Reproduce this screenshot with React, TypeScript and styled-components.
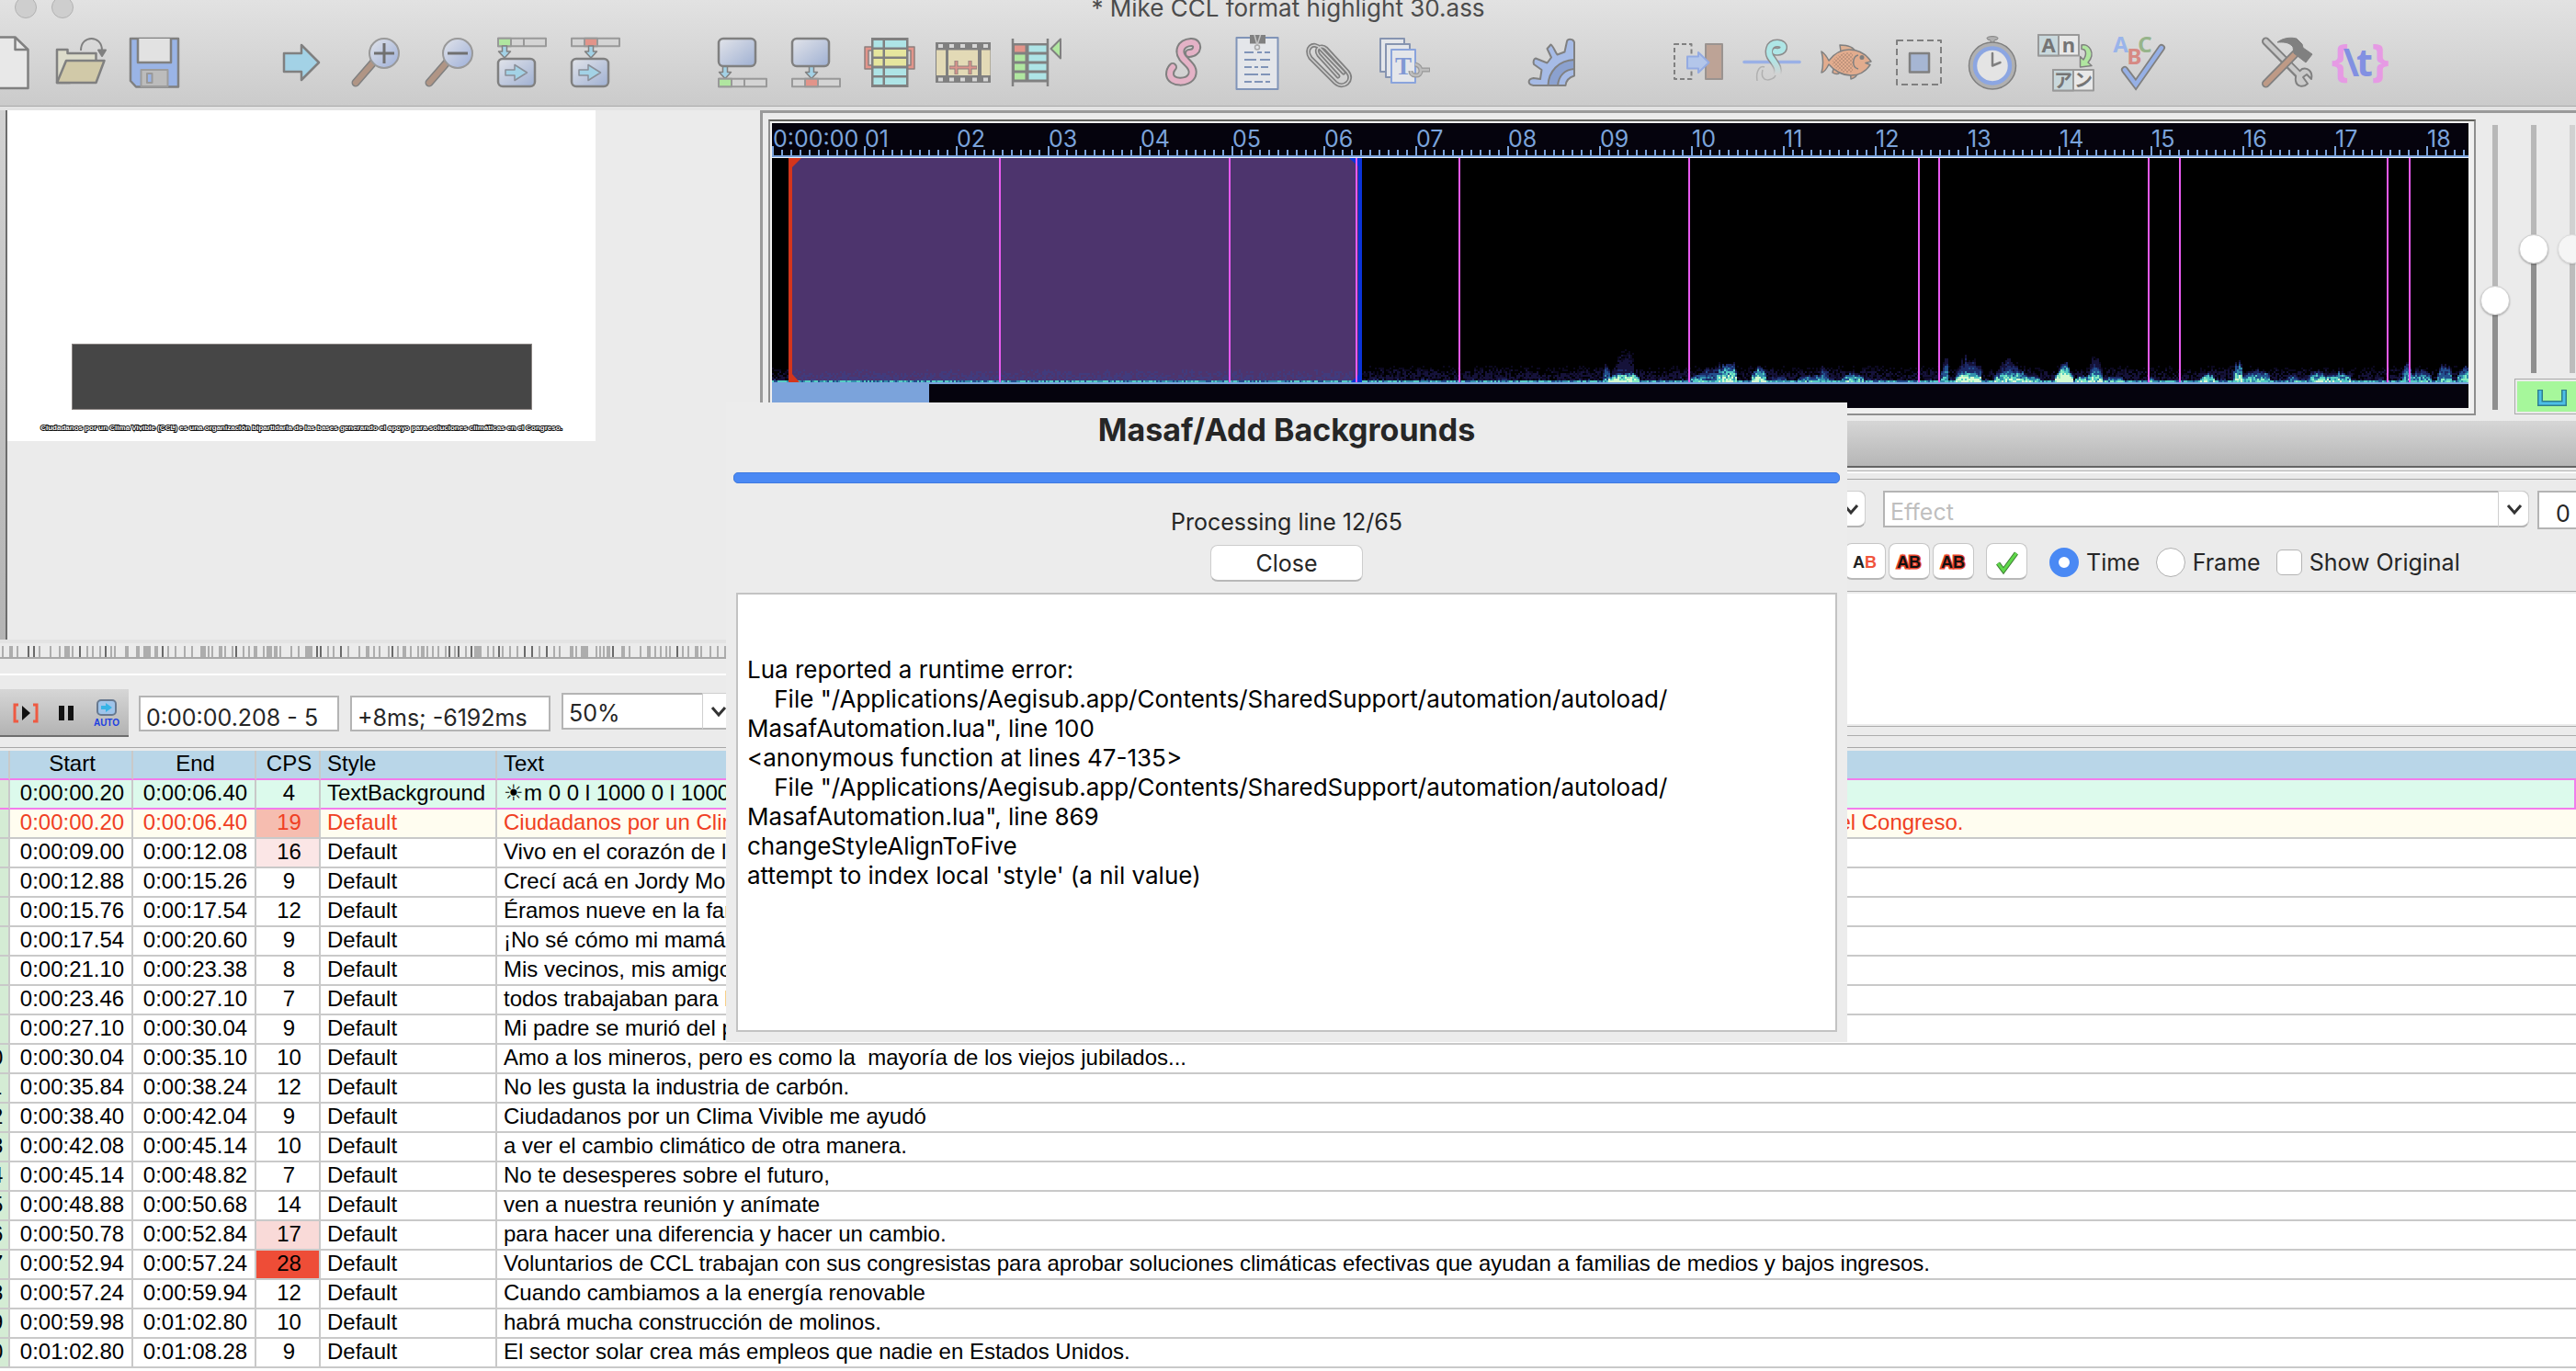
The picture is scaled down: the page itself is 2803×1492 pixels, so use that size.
import React from 'react';
import styled, { createGlobalStyle, css } from 'styled-components';

const ui = `Inter, Roboto, "Noto Sans", sans-serif`;
const gridFont = `"Liberation Sans", Arial, sans-serif`;
const G = '#808080';

const Global = createGlobalStyle`
  *, *::before, *::after { box-sizing: border-box; }
  body { margin: 0; background: #ebebeb; color: #262626; font-family: ${ui}; font-size: 25px; overflow: hidden; }
  button, input, select, textarea { font: inherit; color: inherit; margin: 0; }
`;

const Window = styled.div`
  position: relative;
  display: flex;
  flex-direction: column;
  height: 100vh;
  overflow: hidden;
`;

/* ---------- title bar and main toolbar ---------- */

const Header = styled.header`
  flex: none;
  background: linear-gradient(#e2e2e2, #cbcbcb);
  border-bottom: 1px solid #a8a8a8;
`;
const TitleBar = styled.div`
  display: grid;
  grid-template-columns: 1fr auto 1fr;
  align-items: center;
  height: 36px;
  margin-top: -10px;
`;
const Lights = styled.div`
  display: flex;
  gap: 16px;
  padding-left: 16px;
`;
const Light = styled.button`
  width: 24px;
  height: 24px;
  padding: 0;
  border: 1px solid #b2b2b2;
  border-radius: 50%;
  background: #cecece;
`;
const Title = styled.h1`
  margin: 0;
  padding-top: 2px;
  font-size: 26px;
  font-weight: 400;
  line-height: 32px;
  color: #4c4c4c;
`;
const Tools = styled.div`
  display: flex;
  height: 89px;
  margin-left: -32px;
  padding-top: 10px;
`;
const ToolGroup = styled.div`
  display: flex;
  margin-right: 80px;
`;
const Tool = styled.button`
  width: 80px;
  height: 64px;
  padding: 0 8px;
  border: 0;
  background: none;
  svg { display: block; width: 64px; height: 64px; overflow: visible; }
`;

/* ---------- panes ---------- */

const Main = styled.main`
  flex: none;
  display: flex;
  border-top: 4px solid #e3e3e3;
`;
const VideoPane = styled.section`
  flex: 0 0 827px;
  display: flex;
  flex-direction: column;
`;
const Stage = styled.div`
  display: flex;
  align-items: flex-start;
  height: 576px;
`;
const StageEdge = styled.div`
  align-self: stretch;
  width: 8px;
  background: linear-gradient(#d2d2d2, #b4b4b4);
  border-right: 2px solid #6d6d6d;
`;
const Video = styled.div`
  display: flex;
  flex-direction: column;
  justify-content: flex-end;
  align-items: center;
  width: 640px;
  height: 360px;
  background: #fff;
`;
const VideoBox = styled.div`
  width: 501px;
  height: 72px;
  background: #464646;
  border: 1px solid #8a8482;
`;
const Caption = styled.p`
  margin: 14px 0 8px;
  font: 700 8px/12px "Liberation Sans", sans-serif;
  color: #fff;
  white-space: nowrap;
  -webkit-text-stroke: 2px #111;
  paint-order: stroke fill;
`;
const SeekBar = styled.div`
  height: 37px;
  padding-top: 3px;
  border-top: 4px solid #e3e3e3;
  svg { display: block; width: 100%; height: 14px; }
`;
const Controls = styled.div`
  display: flex;
  align-items: flex-start;
  padding-top: 15px;
  border-top: 2px solid #fff;
`;
const PlayBar = styled.div`
  display: flex;
  gap: 8px;
  align-items: center;
  width: 140px;
  height: 52px;
  padding-left: 8px;
  margin-right: 11px;
  background: linear-gradient(#d6d6d6, #b3b3b3);
  border-bottom: 2px solid #6d6d6d;
`;
const PlayButton = styled.button`
  width: 40px;
  height: 40px;
  padding: 0;
  border: 0;
  background: none;
  svg { display: block; width: 40px; height: 40px; overflow: visible; }
`;
const fieldLook = css`
  border: 2px solid #b4b4b4;
  border-radius: 0;
  background: #fff;
  outline: none;
`;
const TimeField = styled.input`
  ${fieldLook}
  width: 218px;
  height: 39px;
  margin: 7px 12px 0 0;
  padding: 8px 6px 0;
`;
const Combo = styled.div<{ $grow?: boolean; $width?: number; $top?: number }>`
  position: relative;
  display: flex;
  flex: ${(p) => (p.$grow ? '1' : 'none')};
  width: ${(p) => (p.$width ? `${p.$width}px` : 'auto')};
  height: 40px;
  margin-top: ${(p) => p.$top ?? 0}px;
`;
const comboField = css`
  ${fieldLook}
  appearance: none;
  width: 100%;
  height: 40px;
  padding: 4px 40px 0 6px;
  border-right: 1px solid #c4c4c4;
  border-radius: 0 8px 8px 0;
`;
const ComboSelect = styled.select`${comboField}`;
const ComboInput = styled.input`
  ${comboField}
  padding-top: 6px;
  &::placeholder { color: #bfbfbf; opacity: 1; }
`;
const Chevron = styled.span`
  position: absolute;
  right: 0;
  top: 0;
  width: 34px;
  height: 40px;
  border: 1px solid #cfcfcf;
  border-bottom: 2px solid #b4b4b4;
  border-radius: 0 8px 8px 0;
  background: #fff;
  pointer-events: none;
  svg { display: block; width: 32px; height: 38px; }
`;

/* ---------- audio ---------- */

const EditPane = styled.section`
  flex: 1;
  min-width: 0;
  display: flex;
  flex-direction: column;
`;
const AudioPanel = styled.div`
  display: flex;
  height: 338px;
  padding: 7px 0 0 6px;
  overflow: hidden;
  border-top: 3px solid #9a9a9a;
  border-left: 3px solid #9a9a9a;
`;
const AudioFrame = styled.div`
  flex: 1;
  min-width: 0;
  height: 322px;
  display: flex;
  flex-direction: column;
  border: 2px solid #8e8e8e;
  border-top-color: #5f5f5b;
  padding: 2px 6px 6px 2px;
  background: #f0f0f0;
`;
const Ruler = styled.div`
  display: flex;
  height: 38px;
  overflow: hidden;
  border-bottom: 1px solid #e8f0fb;
  background:
    linear-gradient(#7ba3db, #7ba3db) 0 35px / 100% 2px no-repeat,
    repeating-linear-gradient(90deg, #7ba3db 0 2px, transparent 2px 100px) 0 25px / 100% 10px no-repeat,
    repeating-linear-gradient(90deg, #7ba3db 0 2px, transparent 2px 10px) 0 29px / 100% 6px no-repeat,
    #05030d;
`;
const Second = styled.span`
  flex: 0 0 100px;
  padding-left: 1px;
  line-height: 34px;
  color: #7ba3db;
  white-space: nowrap;
`;
const Spectrum = styled.svg`
  display: block;
  width: 100%;
  height: 246px;
  background: #000;
  border-bottom: 2px solid #7ba3db;
`;
const AudioScroll = styled.div`
  flex: 1;
  background: #05030d;
`;
const AudioThumb = styled.div`
  width: 171px;
  height: 100%;
  background: #7ba3db;
`;
const SliderSide = styled.div`
  flex: 0 0 109px;
  display: grid;
  grid-template-columns: 42px 42px 42px;
  grid-template-rows: 270px 48px;
  padding-top: 6px;
  overflow: hidden;
`;
const VSlider = styled.input<{ $length: number; $split: number; $dim?: boolean }>`
  appearance: none;
  writing-mode: vertical-lr;
  direction: rtl;
  width: 32px;
  height: ${(p) => p.$length}px;
  margin-left: 5px;
  opacity: ${(p) => (p.$dim ? 0.5 : 1)};
  background: linear-gradient(#b8b8b8 0 ${(p) => p.$split}%, #8f8f8f ${(p) => p.$split}% 100%) center / 6px 100% no-repeat;
  &::-webkit-slider-thumb {
    appearance: none;
    width: 32px;
    height: 32px;
    border-radius: 50%;
    background: #fff;
    border: 1px solid #d0d0d0;
    box-shadow: 0 1px 2px rgba(0, 0, 0, 0.3);
  }
`;
const LinkButton = styled.button`
  grid-column: 2 / 4;
  align-self: start;
  width: 84px;
  height: 39px;
  margin: 6px 0 0 0;
  padding: 0 0 0 24px;
  border: 1px solid #a9a9a9;
  background: #a6f79b;
  box-shadow: inset 0 0 0 2px #ebebeb;
  svg { display: block; width: 32px; height: 20px; }
`;
const AudioBar = styled.div`
  height: 51px;
  background: linear-gradient(#d6d6d6, #b6b6b6);
  border-bottom: 2px solid #646464;
`;
const EditGroup = styled.div`
  margin-top: 3px;
  padding-top: 8px;
  border-top: 1px solid #b0b0b0;
  box-shadow: inset 0 2px #fff;
`;
const EditBody = styled.div`
  border-top: 1px solid #a8a8a8;
  padding-top: 12px;
`;
const EditRow = styled.div`
  display: flex;
  align-items: flex-start;
  height: 57px;
  overflow: hidden;
`;
const Gap = styled.span<{ $w: number }>`flex: 0 0 ${(p) => p.$w}px;`;
const LayerField = styled.input`
  ${fieldLook}
  flex: 0 0 42px;
  min-width: 0;
  height: 42px;
  padding: 8px 0 0 18px;
  border-right: 0;
`;
const FormatRow = styled.div`
  display: flex;
  align-items: center;
  height: 40px;
  padding-left: 1180px;
  white-space: nowrap;
`;
const SmallButton = styled.button<{ $after?: number }>`
  flex: none;
  width: 45px;
  height: 40px;
  margin-right: ${(p) => p.$after ?? 3}px;
  padding: 0;
  border: 1px solid #c6c6c6;
  border-bottom: 2px solid #b8b8b8;
  border-radius: 8px;
  background: #fff;
  svg { display: block; width: 43px; height: 37px; }
`;
const Choice = styled.label<{ $after?: number }>`
  display: flex;
  align-items: center;
  gap: 8px;
  padding-top: 2px;
  margin-right: ${(p) => p.$after ?? 0}px;
`;
const Radio = styled.input`
  appearance: none;
  width: 32px;
  height: 32px;
  border: 1px solid #b0b0b0;
  border-radius: 50%;
  background: #fff;
  &:checked { border: 10px solid #4a89f4; }
`;
const Tick = styled.input`
  appearance: none;
  width: 28px;
  height: 28px;
  border: 1px solid #b4b4b4;
  border-radius: 6px;
  background: #fff;
`;
const LineEditor = styled.textarea`
  display: block;
  width: 100%;
  height: 148px;
  margin-top: 12px;
  border: 1px solid #acacac;
  border-width: 1px 0;
  box-shadow: inset 0 2px #ebebeb, inset 0 -2px #ebebeb;
  background: #fff;
  resize: none;
  outline: none;
`;
const EditFoot = styled.div`
  margin-top: 9px;
  height: 13px;
  border-top: 1px solid #acacac;
`;

/* ---------- subtitle grid ---------- */

const GridArea = styled.div`
  flex: 1;
  min-height: 0;
  overflow: hidden;
  padding-top: 3px;
  margin-left: -32px;
  border-top: 1px solid #a8a8a8;
  background: linear-gradient(#ebebeb 0 3px, #fff 3px);
`;
const Grid = styled.table`
  width: 100%;
  table-layout: fixed;
  border-collapse: separate;
  border-spacing: 0;
  font: 24px/28px ${gridFont};
  color: #000;
`;
const cell = css`
  height: 32px;
  padding: 0 0 2px 7px;
  overflow: hidden;
  border-bottom: 2px solid #c9c9c9;
  border-right: 2px solid #c9c9c9;
  font-weight: 400;
  text-align: left;
  white-space: pre;
  &:last-child { border-right: 0; }
`;
const centered = css`
  text-align: center;
  padding-left: 3px;
`;
const Head = styled.th<{ $center?: boolean }>`
  ${cell}
  ${(p) => p.$center && centered}
  background: #b9d6e8;
  border-bottom-color: #f27ceb;
`;
const Cell = styled.td<{ $center?: boolean; $bg?: string }>`
  ${cell}
  ${(p) => p.$center && centered}
  ${(p) => p.$bg && `background: ${p.$bg};`}
`;
const Row = styled.tr<{ $kind?: string }>`
  ${(p) => p.$kind === 'active' && css`
    background: #dcfaec;
    td { border-bottom-color: #f27ceb; }
    td:last-child { border-right: 2px solid #f27ceb; }
  `}
  ${(p) => p.$kind === 'clash' && css`background: #fffdf0; color: #f04023;`}
`;

/* ---------- progress dialog ---------- */

const Dialog = styled.div`
  position: absolute;
  top: 438px;
  left: 790px;
  width: 1220px;
  height: 696px;
  display: flex;
  flex-direction: column;
  align-items: center;
  padding: 8px 8px 11px;
  background: #ececec;
`;
const DialogTitle = styled.h2`
  margin: 0;
  font-size: 34px;
  line-height: 44px;
  font-weight: 700;
`;
const Progress = styled.progress`
  appearance: none;
  flex: none;
  width: 100%;
  height: 12px;
  margin-top: 24px;
  border: 0;
  &::-webkit-progress-bar { background: #d0d0d0; border-radius: 5px; }
  &::-webkit-progress-value { background: #4a89f4; border: 1px solid #3f7ae0; border-radius: 5px; }
`;
const Status = styled.p`
  margin: 26px 0 9px;
  line-height: 32px;
`;
const CloseButton = styled.button`
  flex: none;
  width: 166px;
  height: 40px;
  padding: 1px 0 0;
  border: 1px solid #cdcdcd;
  border-bottom: 2px solid #b8b8b8;
  border-radius: 8px;
  background: #fff;
`;
const Log = styled.textarea`
  flex: 1;
  width: 1198px;
  margin-top: 12px;
  padding: 2px 10px;
  border: 2px solid #c3c3c3;
  background: #fff;
  color: #000;
  font-size: 26px;
  line-height: 32px;
  white-space: pre;
  resize: none;
  outline: none;
  overflow: hidden;
`;

/* ---------- drawings ---------- */

const Svg = ({ children }: { children: React.ReactNode }) => (
  <svg viewBox="0 0 64 64" fill="none" stroke={G} strokeWidth="2" strokeLinejoin="round" aria-hidden="true">{children}</svg>
);
const Glass = ({ plus }: { plus?: boolean }) => (
  <Svg>
    <path d="M31 31L11 54" stroke={G} strokeWidth="9" strokeLinecap="round" />
    <path d="M31 31L11 54" stroke="#b09585" strokeWidth="6" strokeLinecap="round" />
    <circle cx="42" cy="22" r="16" fill="url(#lens)" stroke="#999" />
    <path d={plus ? 'M31 22H53M42 11V33' : 'M31 22H53'} stroke="#707070" strokeWidth="3" />
  </Svg>
);
const KeyBar = ({ y, red }: { y: number; red?: boolean }) => (
  <g stroke="#999">
    <rect x="6" y={y} width="52" height="8.5" fill="#d4d4d4" />
    {red ? <rect x="20" y={y} width="14" height="8.5" fill="#e2948a" /> : <><rect x="6" y={y} width="14" height="8.5" fill="#b0e6a0" /><path d={`M34 ${y}v8.5`} /></>}
  </g>
);
const Down = ({ x, y }: { x: number; y: number }) => (
  <path d={`M${x - 2.5} ${y}v6h-4l6.5 7 6.5-7h-4v-6z`} fill="#a3d2e6" strokeWidth="1.5" />
);
const JumpVideo = ({ red }: { red?: boolean }) => (
  <Svg>
    <KeyBar y={5.7} red={red} />
    <Down x={red ? 27 : 13} y={14} />
    <rect x="6" y="28" width="40" height="30" rx="5" fill="url(#pane)" strokeWidth="2.5" />
    <path d="M14 40H24V34.500L37.500 43L24 51.500V46H14Z" fill="#a3d2e6" stroke="#8a8f98" strokeWidth="1.500" />
  </Svg>
);
const SnapVideo = ({ red }: { red?: boolean }) => (
  <Svg>
    <rect x="6" y="6" width="40" height="30" rx="5" fill="url(#pane)" strokeWidth="2.5" />
    <Down x={red ? 27 : 13} y={36.5} />
    <KeyBar y={49.7} red={red} />
  </Svg>
);
const Cells = ({ xs, ys, fills, h }: { xs: number[][]; ys: number[]; fills: string[][]; h: number }) => (
  <g stroke="none">
    {ys.map((y, r) => xs.map(([x, w], c) => <rect key={`${r}-${c}`} x={x} y={y} width={w} height={h} fill={fills[r][c]} />))}
  </g>
);
const cy = '#aee4e6', ye = '#e6e69e', gr = '#b0e6a0', rd = '#e2948a';
const clip = 'M46 43L21 17C13 8 3 17 10 27L37 54C46 62 58 51 50 42L27 17C21 12 14 17 19 24L40 47';

const toolGroups: [string, React.ReactNode][][] = [
  [
    ['New', <Svg key="i"><path d="M10 4.500H40.500L54.500 18V60H10Z" fill="#e8e8e8" strokeWidth="2.500" /><path d="M40.500 4.500V18H54.500" strokeWidth="2.500" /></Svg>],
    ['Open', <Svg key="i"><path d="M6 54V18H17.500V22H48.500V32L20 54Z" fill="#dddccb" strokeWidth="2.500" /><path d="M16 30H57.500L48.500 54H6Z" fill="#d1c9a8" strokeWidth="2.500" /><path d="M32 19C32 1.500 55 1.500 55 19" /><path d="M51 18.500H59L55 25Z" fill={G} /></Svg>],
    ['Save', <Svg key="i"><path d="M6 6H58V58.500H12L6 52Z" fill="#9ab4e6" strokeWidth="2.500" /><path d="M14 6V32H50V6" fill="#e2e2e2" strokeWidth="2.500" /><path d="M17.500 58V40H46.500V58Z" fill="#bcbcbc" stroke="#9c9c9c" /><rect x="24" y="44" width="5.500" height="10" fill="#9ab4e6" stroke="#999" /></Svg>],
  ],
  [
    ['Jump to', <Svg key="i"><path d="M13 22H32V13L51 32L32 51V42H13Z" fill="#a3d2e6" strokeWidth="2.500" /></Svg>],
    ['Zoom in', <Glass key="i" plus />],
    ['Zoom out', <Glass key="i" />],
    ['Jump video to start', <JumpVideo key="i" />],
    ['Jump video to end', <JumpVideo key="i" red />],
  ],
  [
    ['Snap start to video', <SnapVideo key="i" />],
    ['Snap end to video', <SnapVideo key="i" red />],
    ['Select visible', <Svg key="i"><path d="M13 15H5V39H13V35H9V19H13ZM51 15H59V39H51V35H55V19H51Z" fill={rd} stroke="#8d7f7d" strokeWidth="1.500" /><rect x="12" y="5" width="40.500" height="54" fill={G} stroke="none" /><Cells xs={[[14.5, 10], [27, 23]]} ys={[8, 18, 28, 38.500, 48.500]} h={7.500} fills={[[cy, cy], [ye, ye], [ye, ye], [cy, cy], [cy, cy]]} /></Svg>],
    ['Snap to scene', <Svg key="i"><g stroke="none"><rect x="2" y="10" width="60" height="44" fill={G} /><rect x="3" y="18.500" width="10" height="27.500" fill="#e3dab6" /><rect x="16" y="18.500" width="32" height="27.500" fill="#e3dab6" /><rect x="52" y="18.500" width="9.500" height="27.500" fill="#e3dab6" />{[5, 17, 29, 42, 54].map((x) => <g key={x} fill="#d6d6d6"><rect x={x} y="12" width="5" height="4" /><rect x={x} y="48.500" width="5" height="4" /></g>)}</g><path d="M17 37.500H47M24.500 30V45M39.500 30V45" stroke="#8d7f7d" strokeWidth="4" /><path d="M17.500 37.500H46.500M24.500 30.500V44.500M39.500 30.500V44.500" stroke="#dc948c" strokeWidth="2" /></Svg>],
    ['Shift to frame', <Svg key="i"><path d="M6 6V58M44 6V58" strokeWidth="2.500" /><rect x="6" y="11" width="38" height="42.500" fill={G} stroke="none" /><Cells xs={[[8, 11.500], [23.500, 19]]} ys={[13.500, 23.500, 33.500, 43.500]} h={7} fills={[[rd, cy], [gr, cy], [gr, cy], [gr, cy]]} /><path d="M47.500 17L58 6.500V27.500Z" fill={gr} /></Svg>],
  ],
  [
    ['Styles manager', <Svg key="i"><path d="M38 22C48 22 49 9.500 40 10C28 11 26 20 31 27C37 34 44 38 41 46C37 55 18 55 17 45C17 41 18 39 20 37" strokeWidth="10" strokeLinecap="round" /><path d="M38 22C48 22 49 9.500 40 10C28 11 26 20 31 27C37 34 44 38 41 46C37 55 18 55 17 45C17 41 18 39 20 37" stroke="#e4b2c6" strokeWidth="6" strokeLinecap="round" /></Svg>],
    ['Script properties', <Svg key="i"><rect x="9.500" y="5" width="45" height="56" fill="#e4e6ea" stroke="#8094b8" /><rect x="24" y="2" width="17" height="9.500" fill={G} stroke="none" /><path d="M29 2L32 13L35.500 2" stroke="#c4c4c4" strokeWidth="1.500" /><circle cx="32" cy="15.500" r="2.500" stroke="#aaa" strokeWidth="1.500" /><path d="M18 21H46" strokeDasharray="10 4 5 3" stroke="#8094b8" /><path d="M18 29H46" strokeDasharray="13 4" stroke="#8094b8" /><path d="M18 37H46" strokeDasharray="8 3 4 3" stroke="#8094b8" /><path d="M18 45H46" strokeDasharray="15 3" stroke="#8094b8" /><path d="M18 53H46" strokeDasharray="8 3 9 3" stroke="#8094b8" /></Svg>],
    ['Attachments', <Svg key="i"><path d={clip} strokeWidth="5" strokeLinecap="round" /><path d={clip} stroke="#d0d0d0" strokeWidth="1.500" strokeLinecap="round" /></Svg>],
    ['Fonts collector', <Svg key="i"><g fill="#e4e6ea" stroke="#8694b0"><rect x="6" y="6" width="26" height="36" /><rect x="12" y="12" width="26" height="36" /><rect x="18" y="18" width="26" height="36" stroke="#8aa4dc" /></g><text x="31" y="45" textAnchor="middle" fontFamily="Liberation Serif, serif" fontWeight="700" fontSize="27" fill="#8199d4" stroke="none">T</text><path d="M44 34C52 36 52 47 44 46C40 46 39 43 39 41M49 40H60" stroke="#999" strokeWidth="5" /><path d="M44 34C52 36 52 47 44 46C40 46 39 43 39 41M49 40H59" stroke="#bdbdbd" strokeWidth="2.500" /></Svg>],
  ],
  [
    ['Automation', <Svg key="i"><path d="M47.500 57H12.500C6 56 6 50 12.500 49L20 50L21.500 40L13 34C12 31 13 28 15 27.500L27.500 32.500L32 26.500L27.500 17L31.500 12.500C34 14 36 20 38.500 23.500L46.500 20.500L49 9C50 6 56 6 57 10V46.500C52 48 48 52 47.500 57Z" fill="#a6bbe6" /><path d="M28.500 57C29 42 40 29.500 57 29V39C46 40 40 47 39 57Z" fill="#8ba1cf" /></Svg>],
  ],
  [
    ['Shift times', <Svg key="i"><rect x="6" y="12" width="18.500" height="38" strokeDasharray="5 3" /><rect x="40" y="12" width="18" height="38" fill="#bda396" stroke="#9a9390" /><path d="M20 25.500H32V21L43.500 32L32 43V38.500H20Z" fill="#b3c6ea" stroke="#94abe2" /></Svg>],
    ['Styling assistant', <Svg key="i"><path d="M2 31.500H62" stroke="#9ab0e6" strokeWidth="3.500" strokeLinecap="round" /><path d="M36 20C46 22 48 11 38 11C28 11 27 22 32 28C36 34 40 38 38 45" strokeWidth="9" strokeLinecap="round" stroke="url(#fade)" /><path d="M36 20C46 22 48 11 38 11C28 11 27 22 32 28C36 34 40 38 38 45" stroke="url(#tent)" strokeWidth="6" strokeLinecap="round" /><path d="M16 52C14 40 20 35 24 37M22 40C18 55 34 52 36 46" stroke="#b0b0b0" strokeWidth="1.500" /></Svg>],
    ['Translation assistant', <Svg key="i"><path d="M27 20L26 13C33 13 41 14 43 21" fill="#deb092" strokeWidth="1.500" /><path d="M37 43C38 47 38 49 38 50C42 49 45 46 46 42M19 39L18 43C21 45 24 45 26 43" fill="#e0ab8e" strokeWidth="1.500" /><path d="M14 30C20 22 27 18 36 18C48 18 56 25 60 31L54 32.500L59 34.500C54 42 46 46 38 46C28 46 19 40 14 34C11 40 8 43 6 43C8 36 8 28 6 20C9 22 12 26 14 30Z" fill="#e2ac8e" strokeWidth="1.500" /><path d="M17 32C24 21 34 20 40 22V42C32 45 24 42 17 32Z" fill="url(#scales)" stroke="none" /><path d="M46 24C40 25 38 37 46 39" strokeWidth="1.500" /><circle cx="50" cy="26.500" r="1.500" fill={G} stroke={G} /></Svg>],
    ['Resample resolution', <Svg key="i"><rect x="8" y="8" width="48" height="48" strokeDasharray="7 4" /><rect x="22" y="22" width="21" height="20.500" fill="#a6b6d3" strokeWidth="2.500" /></Svg>],
    ['Timing post-processor', <Svg key="i"><path d="M26 5.500C26 3 38 3 38 5.500C38 8 34 7 34 8V11H30V8C30 7 26 8 26 5.500Z" fill="#b0b0b0" strokeWidth="1" /><circle cx="32" cy="35.500" r="25.500" fill="#b0b0b0" strokeWidth="1.500" /><circle cx="32" cy="35.500" r="19" fill="#e4e4e4" stroke="#8ca6e2" strokeWidth="4.500" /><path d="M32 22V35.500L40.500 32" strokeWidth="2.500" strokeLinecap="round" /></Svg>],
    ['Kanji timer', <Svg key="i"><rect x="2" y="2" width="44" height="22.500" fill="#e8e8e8" stroke="#999" /><rect x="2" y="2" width="22" height="22.500" fill="#c9d8dc" stroke="#999" /><rect x="18" y="40" width="44" height="22.500" fill="#e8e8e8" stroke="#999" /><rect x="18" y="40" width="22" height="22.500" fill="#c9d8dc" stroke="#999" /><g fill="#757575" stroke="none" fontFamily="Noto Sans, sans-serif" fontWeight="700" fontSize="22" textAnchor="middle"><text x="13" y="21">A</text><text x="35" y="21">n</text><g fontFamily="Noto Sans CJK JP, sans-serif" fontSize="20"><text x="29" y="59">ア</text><text x="51" y="59">ン</text></g></g><path d="M49 13C57 11 65 22 56 32L60 35.500L47.500 37V25.500L51 29C55 23 54 17 49 17.500Z" fill={gr} strokeWidth="1.500" /></Svg>],
    ['Spell checker', <Svg key="i"><g stroke="none" fontFamily="Noto Sans, sans-serif" fontWeight="700" fontSize="24" textAnchor="middle"><text x="11.500" y="21" fill="#9ab4ea">A</text><text x="26.500" y="34" fill="#d68a84">B</text><text x="38" y="21" fill="#96b48a">C</text></g><path d="M16 40L28 56L56 16" strokeWidth="8" strokeLinecap="round" strokeLinejoin="miter" /><path d="M16 40L28 56L56 16" stroke="#96b0e6" strokeWidth="4.500" strokeLinecap="round" strokeLinejoin="miter" /></Svg>],
  ],
  [
    ['Options', <Svg key="i"><path d="M9.500 9L46 46" strokeWidth="9" strokeLinecap="round" /><path d="M49 39C55 37 61 42 59 50L54 45L50 48L55 55C50 60 43 58 42 52C41 49 43 47 42 45Z" fill="#c9c9c9" /><path d="M9.500 9L47 46.500" stroke="#c9c9c9" strokeWidth="5" strokeLinecap="round" /><path d="M9.500 55L42 22" strokeWidth="9" strokeLinecap="round" /><path d="M9.500 55L42 22" stroke="#be9a86" strokeWidth="5.500" strokeLinecap="round" /><path d="M22 10C30 4 39 5 43 6L49 12L50 16L60 23L53 32L40 22L39 15C34 9 28 10 22 10Z" fill={G} stroke={G} strokeWidth="1" /></Svg>],
    ['Toggle tags', <Svg key="i"><g stroke="none" fontFamily="Noto Sans, sans-serif" fontWeight="700" textAnchor="middle"><text x="10.500" y="47" fontSize="48" fill="#e69ae4">{'{'}</text><text x="22.500" y="47" fontSize="42" fill="#8290e2">\</text><text x="37" y="47" fontSize="41" fill="#8290e2">t</text><text x="54" y="47" fontSize="48" fill="#e69ae4">{'}'}</text></g></Svg>],
  ],
];

const HiddenSvg = styled.svg`
  position: absolute;
  width: 0;
  height: 0;
`;
const Defs = () => (
  <HiddenSvg aria-hidden="true">
    <defs>
      <linearGradient id="lens" x1="0" y1="0" x2="1" y2="1"><stop offset="0" stopColor="#e2e4ea" /><stop offset="1" stopColor="#9dafd8" /></linearGradient>
      <linearGradient id="pane" x1="0" y1="0" x2="1" y2="1"><stop offset="0" stopColor="#e2e4ea" /><stop offset="1" stopColor="#9fb0d2" /></linearGradient>
      <linearGradient id="fade" x1="0" y1="0" x2="0" y2="1"><stop offset="0.600" stopColor="#8c8c8c" /><stop offset="1" stopColor="#8c8c8c" stopOpacity="0" /></linearGradient>
      <linearGradient id="tent" x1="0" y1="0" x2="0" y2="1"><stop offset="0.500" stopColor="#aee6e6" /><stop offset="1" stopColor="#d2d2d2" /></linearGradient>
      <pattern id="scales" width="4" height="4" patternUnits="userSpaceOnUse"><path d="M0 0L2 2L0 4M4 0L2 2L4 4" stroke="#b98f78" strokeWidth="0.800" fill="none" /></pattern>
      <clipPath id="selection"><rect x="18" width="620" height="242" /></clipPath>
    </defs>
  </HiddenSvg>
);

const random = (seed: number) => () => {
  seed = (seed * 1664525 + 1013904223) % 4294967296;
  return seed / 4294967296;
};

/* Loud passages: start, end, height, strength, in pixels from the left of the display. */
const bursts = [
  [918, 938, 34, 0.3], [903, 912, 15, 0.8], [910, 943, 8, 1.5], [914, 938, 20, 0.45], [1000, 1016, 8, 0.9], [1010, 1050, 15, 0.7], [1028, 1050, 18, 1.2],
  [1065, 1081, 14, 1.3], [1092, 1104, 6, 0.7], [1115, 1150, 6, 0.9], [1139, 1150, 14, 0.7], [1164, 1187, 8, 1],
  [1272, 1280, 22, 0.8], [1288, 1315, 22, 0.7], [1288, 1315, 10, 1.5], [1332, 1358, 22, 0.6], [1330, 1366, 12, 1.2], [1360, 1380, 6, 1],
  [1395, 1416, 13, 1.3], [1397, 1414, 16, 1.4], [1418, 1436, 6, 1.2], [1431, 1448, 22, 0.5], [1431, 1448, 14, 1.1], [1448, 1470, 5, 0.9], [1497, 1504, 5, 0.8],
  [1554, 1570, 8, 1.1], [1589, 1600, 18, 1.1], [1600, 1630, 11, 1], [1647, 1660, 7, 0.8], [1672, 1690, 11, 1], [1690, 1718, 9, 1.1],
  [1773, 1783, 18, 0.9], [1783, 1806, 11, 0.9], [1812, 1828, 16, 0.9], [1834, 1846, 14, 1.1],
];
const palette = ['#0b0820', '#15123a', '#1c2a66', '#23508e', '#3390ac', '#55cdc4', '#86ecc0', '#d4fbd0'];

const buildSpectrum = () => {
  const rnd = random(7);
  const paths = palette.map(() => '');
  for (let x = 0; x < 1848; x += 2) {
    const hum = 0.5 + 0.5 * Math.sin(x / 37) * Math.sin(x / 11);
    const wobble = 0.8 + 0.4 * Math.abs(Math.sin(x / 5)) * rnd();
    for (let up = 0; up < 44; up += 2) {
      let v = up === 0 ? 0.4 + rnd() * 0.35 : Math.max(0, (rnd() * 0.26 + hum * 0.08) * (1 - up / 22));
      for (const [a, b, height, s] of bursts) {
        const middle = (a + b) / 2;
        const dome = 1 - 0.5 * Math.pow(Math.abs(x - middle) / (middle - a), 2);
        const h = height * 1.25 * wobble * dome;
        if (x >= a && x < b && up < h) {
          v = Math.max(v, s * Math.sqrt(1 - up / h) * (0.5 + rnd() * 0.45));
        }
      }
      const level = Math.min(7, Math.floor(v * 8));
      if (level > 0 || (v > 0.07 && rnd() > 0.4)) paths[level] += `M${x} ${242 - up}h2v2h-2z`;
    }
  }
  return paths;
};
const spectrum = buildSpectrum();
const keyframes = [247, 497, 635, 747, 997, 1247, 1269, 1497, 1531, 1757, 1781];

const buildTicks = () => {
  const rnd = random(31);
  const light: number[][] = [];
  const dark: number[] = [];
  for (let x = 2; x < 1000; x += 4 + Math.floor(rnd() * 3) * 2 + (rnd() > 0.8 ? 4 : 0)) {
    if (rnd() > 0.88) dark.push(x);
    else light.push([x, rnd() > 0.72 ? 4 : 2]);
  }
  return { light, dark };
};
const seekTicks = buildTicks();

const ChevronMark = () => (
  <Chevron><svg viewBox="0 0 32 38" fill="none" stroke="#333" strokeWidth="3"><path d="M10 15L17 23L24 15" /></svg></Chevron>
);

const LetterIcon = ({ first, second, halo }: { first: string; second: string; halo?: string }) => (
  <svg viewBox="0 0 43 37" aria-hidden="true">
    <text x="21" y="26" textAnchor="middle" fontFamily="Liberation Sans, sans-serif" fontWeight="700" fontSize="18" stroke={halo} strokeWidth={halo ? 3 : 0} paintOrder="stroke">
      <tspan fill={first}>A</tspan><tspan fill={second}>B</tspan>
    </text>
  </svg>
);

/* ---------- data ---------- */

const rows: [string, string, number, string, string, string?][] = [
  ['0:00:00.20', '0:00:06.40', 4, 'TextBackground', '☀m 0 0 l 1000 0 l 1000 150 l 0 150'],
  ['0:00:00.20', '0:00:06.40', 19, 'Default', 'Ciudadanos por un Clima Vivible (CCL) es una organización bipartidaria de las bases generando el apoyo para soluciones climáticas en el Congreso.', '#f6bdb0'],
  ['0:00:09.00', '0:00:12.08', 16, 'Default', 'Vivo en el corazón de la', '#fbe6e6'],
  ['0:00:12.88', '0:00:15.26', 9, 'Default', 'Crecí acá en Jordy Mo'],
  ['0:00:15.76', '0:00:17.54', 12, 'Default', 'Éramos nueve en la familia'],
  ['0:00:17.54', '0:00:20.60', 9, 'Default', '¡No sé cómo mi mamá'],
  ['0:00:21.10', '0:00:23.38', 8, 'Default', 'Mis vecinos, mis amigos'],
  ['0:00:23.46', '0:00:27.10', 7, 'Default', 'todos trabajaban para la'],
  ['0:00:27.10', '0:00:30.04', 9, 'Default', 'Mi padre se murió del p'],
  ['0:00:30.04', '0:00:35.10', 10, 'Default', 'Amo a los mineros, pero es como la  mayoría de los viejos jubilados...'],
  ['0:00:35.84', '0:00:38.24', 12, 'Default', 'No les gusta la industria de carbón.'],
  ['0:00:38.40', '0:00:42.04', 9, 'Default', 'Ciudadanos por un Clima Vivible me ayudó'],
  ['0:00:42.08', '0:00:45.14', 10, 'Default', 'a ver el cambio climático de otra manera.'],
  ['0:00:45.14', '0:00:48.82', 7, 'Default', 'No te desesperes sobre el futuro,'],
  ['0:00:48.88', '0:00:50.68', 14, 'Default', 'ven a nuestra reunión y anímate'],
  ['0:00:50.78', '0:00:52.84', 17, 'Default', 'para hacer una diferencia y hacer un cambio.', '#f9dad8'],
  ['0:00:52.94', '0:00:57.24', 28, 'Default', 'Voluntarios de CCL trabajan con sus congresistas para aprobar soluciones climáticas efectivas que ayudan a familias de medios y bajos ingresos.', '#ee4d37'],
  ['0:00:57.24', '0:00:59.94', 12, 'Default', 'Cuando cambiamos a la energía renovable'],
  ['0:00:59.98', '0:01:02.80', 10, 'Default', 'habrá mucha construcción de molinos.'],
  ['0:01:02.80', '0:01:08.28', 9, 'Default', 'El sector solar crea más empleos que nadie en Estados Unidos.'],
];

const log = `

Lua reported a runtime error:
    File "/Applications/Aegisub.app/Contents/SharedSupport/automation/autoload/
MasafAutomation.lua", line 100
<anonymous function at lines 47-135>
    File "/Applications/Aegisub.app/Contents/SharedSupport/automation/autoload/
MasafAutomation.lua", line 869
changeStyleAlignToFive
attempt to index local 'style' (a nil value)`;

const seconds = Array.from({ length: 19 }, (_, i) => (i === 0 ? '0:00:00' : String(i).padStart(2, '0')));

export default function App() {
  return (
    <Window>
      <Global />
      <Defs />
      <Header>
        <TitleBar>
          <Lights><Light aria-label="Minimize" /><Light aria-label="Zoom" /></Lights>
          <Title>* Mike CCL format highlight 30.ass</Title>
        </TitleBar>
        <Tools role="toolbar">
          {toolGroups.map((group, i) => (
            <ToolGroup key={i}>
              {group.map(([name, icon]) => <Tool key={name} aria-label={name}>{icon}</Tool>)}
            </ToolGroup>
          ))}
        </Tools>
      </Header>

      <Main>
        <VideoPane>
          <Stage>
            <StageEdge />
            <Video>
              <VideoBox />
              <Caption>{rows[1][4]}</Caption>
            </Video>
          </Stage>
          <SeekBar>
            <svg aria-hidden="true">
              {seekTicks.light.map(([x, w]) => <rect key={x} x={x} width={w} height="14" fill="#adadad" />)}
              {seekTicks.dark.map((x) => <rect key={x} x={x} width="2" height="14" fill="#6a6a6a" />)}
              <rect y="12" width="100%" height="2" fill="#a8a8a8" />
            </svg>
          </SeekBar>
          <Controls>
            <PlayBar>
              <PlayButton aria-label="Play line">
                <svg viewBox="0 0 40 40"><path d="M12 12H8V30H12M28 12H32V30H28" fill="none" stroke="#ee5a42" strokeWidth="3" /><path d="M16 13L25 21L16 29Z" fill="#111" /></svg>
              </PlayButton>
              <PlayButton aria-label="Pause">
                <svg viewBox="0 0 40 40"><path d="M8 13H14V29H8ZM18 13H24V29H18Z" fill="#111" /></svg>
              </PlayButton>
              <PlayButton aria-label="Auto scroll">
                <svg viewBox="0 0 40 40"><rect x="2" y="7" width="20" height="16" rx="4" fill="#9fc4ea" stroke="#68798f" strokeWidth="2" /><path d="M6 13H11V10L18 15L11 20V17H6Z" fill="#38b4e6" /><text x="12" y="35" textAnchor="middle" fontFamily="Liberation Sans, sans-serif" fontWeight="700" fontSize="10" fill="#1c3fe0">AUTO</text></svg>
              </PlayButton>
            </PlayBar>
            <TimeField aria-label="Current time" readOnly value="0:00:00.208 - 5" />
            <TimeField aria-label="Relative time" readOnly value="+8ms; -6192ms" />
            <Combo $width={187} $top={4}>
              <ComboSelect aria-label="Zoom"><option>50%</option></ComboSelect>
              <ChevronMark />
            </Combo>
          </Controls>
        </VideoPane>

        <EditPane>
          <AudioPanel>
            <AudioFrame>
              <Ruler>{seconds.map((s) => <Second key={s}>{s}</Second>)}</Ruler>
              <Spectrum aria-label="Audio spectrum">
                {spectrum.map((d, i) => <path key={i} d={d} fill={palette[i]} />)}
                <rect x="18" width="622" height="242" fill="#4d346d" />
                <g opacity="0.35" clipPath="url(#selection)">{spectrum.slice(1, 4).map((d, i) => <path key={i} d={d} fill="#2c4a9c" />)}</g>
                <path d="M18 0H32L22 10V235L30 244H18Z" fill="#d4351c" />
                <path d="M642 0H628L638 9V236L630 244H642Z" fill="#0a33d8" />
                {keyframes.map((x) => <rect key={x} x={x} width="2" height="244" fill="#e85af0" />)}
              </Spectrum>
              <AudioScroll><AudioThumb /></AudioScroll>
            </AudioFrame>
            <SliderSide>
              <VSlider type="range" aria-label="Horizontal zoom" $length={310} $split={61} defaultValue={37} />
              <VSlider type="range" aria-label="Vertical zoom" $length={270} $split={50} defaultValue={50} />
              <VSlider type="range" aria-label="Volume" $length={270} $split={50} $dim defaultValue={50} />
              <LinkButton aria-label="Link zoom and volume">
                <svg viewBox="0 0 32 20"><path d="M3 2V17H29V2" fill="none" stroke="#2f7f8c" strokeWidth="6" /><path d="M3 3V17H29V3" fill="none" stroke="#4cbfe8" strokeWidth="3" /></svg>
              </LinkButton>
            </SliderSide>
          </AudioPanel>
          <AudioBar />
          <EditGroup>
            <EditBody>
              <EditRow>
                <Combo $grow>
                  <ComboSelect aria-label="Actor" />
                  <ChevronMark />
                </Combo>
                <Gap $w={19} />
                <Combo $width={703}>
                  <ComboInput aria-label="Effect" placeholder="Effect" />
                  <ChevronMark />
                </Combo>
                <Gap $w={9} />
                <LayerField aria-label="Margin left" defaultValue="0" />
              </EditRow>
              <FormatRow>
                <SmallButton aria-label="Secondary color"><LetterIcon first="#222" second="#f0543c" /></SmallButton>
                <SmallButton aria-label="Outline color"><LetterIcon first="#111" second="#111" halo="#e8432a" /></SmallButton>
                <SmallButton aria-label="Shadow color" $after={13}><LetterIcon first="#111" second="#111" halo="#e8432a" /></SmallButton>
                <SmallButton aria-label="Commit" $after={24}>
                  <svg viewBox="0 0 43 37"><path d="M12 21L18 29L32 10" fill="none" stroke="#3f7d35" strokeWidth="5" /><path d="M12 21L18 29L32 10" fill="none" stroke="#5fd84a" strokeWidth="3" /></svg>
                </SmallButton>
                <Choice $after={17}><Radio type="radio" name="unit" defaultChecked />Time</Choice>
                <Choice $after={17}><Radio type="radio" name="unit" />Frame</Choice>
                <Choice><Tick type="checkbox" />Show Original</Choice>
              </FormatRow>
              <LineEditor aria-label="Line text" />
              <EditFoot />
            </EditBody>
          </EditGroup>
        </EditPane>
      </Main>

      <GridArea>
        <Grid>
          <colgroup>
            <col style={{ width: 43 }} /><col style={{ width: 134 }} /><col style={{ width: 134 }} /><col style={{ width: 70 }} /><col style={{ width: 192 }} /><col />
          </colgroup>
          <thead>
            <tr>
              <Head $center>#</Head><Head $center>Start</Head><Head $center>End</Head><Head $center>CPS</Head><Head>Style</Head><Head>Text</Head>
            </tr>
          </thead>
          <tbody>
            {rows.map(([start, end, cps, style, text, heat], i) => (
              <Row key={i} $kind={i === 0 ? 'active' : i === 1 ? 'clash' : undefined}>
                <Cell $center $bg="#d4ecd4">{i + 1}</Cell>
                <Cell $center>{start}</Cell>
                <Cell $center>{end}</Cell>
                <Cell $center $bg={heat}>{cps}</Cell>
                <Cell>{style}</Cell>
                <Cell>{text}</Cell>
              </Row>
            ))}
          </tbody>
        </Grid>
      </GridArea>

      <Dialog role="dialog" aria-label="Masaf/Add Backgrounds">
        <DialogTitle>Masaf/Add Backgrounds</DialogTitle>
        <Progress max={1} value={1} aria-label="Progress" />
        <Status>Processing line 12/65</Status>
        <CloseButton>Close</CloseButton>
        <Log aria-label="Log" readOnly value={log} />
      </Dialog>
    </Window>
  );
}
